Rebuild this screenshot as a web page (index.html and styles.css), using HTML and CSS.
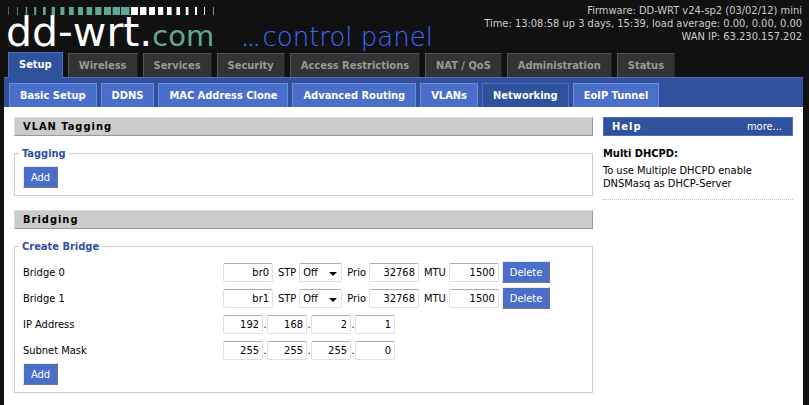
FILE: index.html
```html
<!DOCTYPE html>
<html lang="en">
<head>
<meta charset="utf-8">
<title>DD-WRT - Networking</title>
<link rel="stylesheet" href="styles.css">
</head>
<body>
<div class="wrapper">
  <header class="header">
    <div class="logo">
      <svg class="bars" width="208" height="8" viewBox="0 0 208 8" aria-hidden="true">
        <g fill="#5fa896">
          <rect x="0" width="0.6" height="8"/><rect x="9" width="0.8" height="8"/><rect x="17.8" width="1.4" height="8"/><rect x="26.2" width="2" height="8"/><rect x="35" width="2.7" height="8"/><rect x="43.6" width="3.4" height="8"/><rect x="52.4" width="4" height="8"/><rect x="61" width="4.7" height="8"/><rect x="70" width="5" height="8"/><rect x="78.6" width="5.6" height="8"/><rect x="87.2" width="6.2" height="8"/><rect x="96" width="7" height="8"/><rect x="104.6" width="7.4" height="8"/><rect x="113" width="8.6" height="8"/>
        </g>
        <g fill="#fff">
          <rect x="123" width="7" height="8"/><rect x="132" width="6.4" height="8"/><rect x="141" width="6" height="8"/><rect x="150" width="5.2" height="8"/><rect x="159" width="4.6" height="8"/><rect x="168.4" width="3.6" height="8"/><rect x="177.8" width="2.6" height="8"/><rect x="187" width="2" height="8"/><rect x="196" width="0.9" height="8"/><rect x="205" width="0.5" height="8"/>
        </g>
      </svg>
      <div class="brand"><span class="name">dd-wrt.</span><span class="tld">com</span><span class="dots">...</span><span class="tagline">control panel</span></div>
    </div>
    <div class="info">
      <div>Firmware: DD-WRT v24-sp2 (03/02/12) mini</div>
      <div>Time: 13:08:58 up 3 days, 15:39, load average: 0.00, 0.00, 0.00</div>
      <div>WAN IP: 63.230.157.202</div>
    </div>
  </header>
  <nav class="tabs">
    <a class="tab current" href="#">Setup</a>
    <a class="tab" href="#">Wireless</a>
    <a class="tab" href="#">Services</a>
    <a class="tab" href="#">Security</a>
    <a class="tab" href="#">Access Restrictions</a>
    <a class="tab" href="#">NAT / QoS</a>
    <a class="tab" href="#">Administration</a>
    <a class="tab" href="#">Status</a>
  </nav>
  <nav class="subtabs">
    <a class="subtab" href="#">Basic Setup</a>
    <a class="subtab" href="#">DDNS</a>
    <a class="subtab" href="#">MAC Address Clone</a>
    <a class="subtab" href="#">Advanced Routing</a>
    <a class="subtab" href="#">VLANs</a>
    <a class="subtab current" href="#">Networking</a>
    <a class="subtab" href="#">EoIP Tunnel</a>
  </nav>
  <div class="content">
    <main class="main">
      <h2 class="bar">VLAN Tagging</h2>
      <fieldset class="group">
        <legend>Tagging</legend>
        <button class="btn" type="button">Add</button>
      </fieldset>
      <h2 class="bar">Bridging</h2>
      <fieldset class="group">
        <legend>Create Bridge</legend>
        <div class="row">
          <label class="label" for="b0">Bridge 0</label>
          <div class="fields">
            <input class="text" id="b0" value="br0">
            <label for="stp0">STP</label>
            <span class="pick"><select id="stp0"><option>Off</option><option>On</option></select></span>
            <label for="prio0">Prio</label>
            <input class="text" id="prio0" value="32768">
            <label for="mtu0">MTU</label>
            <input class="text" id="mtu0" value="1500">
            <button class="btn" type="button">Delete</button>
          </div>
        </div>
        <div class="row">
          <label class="label" for="b1">Bridge 1</label>
          <div class="fields">
            <input class="text" id="b1" value="br1">
            <label for="stp1">STP</label>
            <span class="pick"><select id="stp1"><option>Off</option><option>On</option></select></span>
            <label for="prio1">Prio</label>
            <input class="text" id="prio1" value="32768">
            <label for="mtu1">MTU</label>
            <input class="text" id="mtu1" value="1500">
            <button class="btn" type="button">Delete</button>
          </div>
        </div>
        <div class="row">
          <label class="label" for="ip">IP Address</label>
          <div class="octets">
            <input class="text" id="ip" value="192"><span>.</span>
            <input class="text" aria-label="IP octet 2" value="168"><span>.</span>
            <input class="text" aria-label="IP octet 3" value="2"><span>.</span>
            <input class="text" aria-label="IP octet 4" value="1">
          </div>
        </div>
        <div class="row">
          <label class="label" for="mask">Subnet Mask</label>
          <div class="octets">
            <input class="text" id="mask" value="255"><span>.</span>
            <input class="text" aria-label="Mask octet 2" value="255"><span>.</span>
            <input class="text" aria-label="Mask octet 3" value="255"><span>.</span>
            <input class="text" aria-label="Mask octet 4" value="0">
          </div>
        </div>
        <button class="btn" type="button">Add</button>
      </fieldset>
    </main>
    <aside class="help">
      <div class="bar help-bar"><h2>Help</h2><a href="#">more...</a></div>
      <h3>Multi DHCPD:</h3>
      <p>To use Multiple DHCPD enable DNSMasq as DHCP-Server</p>
    </aside>
  </div>
</div>
</body>
</html>
```
FILE: styles.css
```css
* { box-sizing: border-box; }

body {
  margin: 0;
  background: #111;
  color: #000;
  font: 11px/13px "DejaVu Sans Condensed", "DejaVu Sans", sans-serif;
}

a { text-decoration: none; }
h2, h3, p { margin: 0; }
h2, h3 { font-size: 11px; }

.wrapper {
  display: flex;
  flex-direction: column;
  min-height: 100vh;
  padding: 0 6px 0 4px;
}

.header {
  display: flex;
  justify-content: space-between;
  height: 52px;
}

.logo {
  flex: none;
  padding: 7px 0 0 2px;
}

.bars {
  display: block;
  margin-left: 2px;
}

.brand {
  font-family: "DejaVu Sans", sans-serif;
  line-height: 34px;
  white-space: nowrap;
}

.name { color: #fff; font-size: 41px; }
.tld { color: #5fa896; font-size: 29px; }
.dots, .tagline { color: #3b6cff; }
.dots { margin: 0 3px 0 28px; font-size: 18px; }
.tagline { font-size: 26px; font-weight: 200; }

.info {
  padding: 4px 1px 0 0;
  color: #ccc;
  text-align: right;
  white-space: nowrap;
}

.tabs {
  display: flex;
  align-items: flex-end;
  gap: 5px;
  padding-left: 4px;
}

.tab, .subtab {
  padding: 0 10px;
  border: 1px solid;
  border-bottom: 0;
  font-weight: bold;
  line-height: 23px;
  white-space: nowrap;
}

.tab {
  border-color: #555 #222 #222 #555;
  background: #333;
  color: #999;
}

.tab.current {
  position: relative;
  margin-bottom: -1px;
  padding-bottom: 2px;
  border-color: #4a6fca;
  background: #30519c;
  color: #fff;
}

.subtabs {
  display: flex;
  gap: 4px;
  padding: 5px 5px 0;
  border-top: 1px solid #4a6fca;
  background: #30519c;
}

.subtab {
  border-color: #6a8be0;
  background: #4a6fca;
  color: #fff;
}

.subtab.current {
  border-color: #4a6fca;
  background: #30519c;
}

.content {
  display: flex;
  flex: 1;
  gap: 10px;
  padding: 10px;
  background: #fff;
}

.main { flex: 1; min-width: 0; }
.help { flex: none; width: 190px; }

.bar {
  height: 19px;
  padding: 0 8px;
  border: 1px solid;
  border-color: #ddd #999 #999 #ddd;
  background: #ccc;
  line-height: 18px;
  letter-spacing: 1px;
}

.group {
  min-width: 0;
  margin: 10px 0 14px;
  padding: 5px 8px 7px;
  border: 1px solid #ccc;
}

.group legend {
  margin-left: -4px;
  padding: 0 3px;
  color: #30519c;
  font-weight: bold;
  line-height: 15px;
}

.btn {
  display: block;
  height: 22px;
  padding: 0 7px;
  border: 1px solid;
  border-color: #eee #777 #777 #eee;
  background: #4a6fca;
  color: #fff;
  font: inherit;
}

.row {
  display: flex;
  align-items: center;
  height: 26px;
}

.label { width: 200px; flex: none; }

.fields { display: flex; align-items: center; }
.fields label { margin: 0 3px 0 5px; }
.fields .btn { margin-left: 3px; }

.text {
  width: 50px;
  height: 19px;
  padding: 1px 3px 0;
  border: 1px solid #dbdfe6;
  border-top-color: #abadb3;
  border-radius: 2px;
  background: #fff;
  color: #000;
  font: inherit;
  text-align: right;
}

.octets { display: flex; align-items: center; }
.octets .text { width: 40px; }
.octets span { width: 4px; text-align: center; }

.pick { position: relative; }

.pick::after {
  content: "";
  position: absolute;
  top: 9px;
  right: 5px;
  border: 4px solid transparent;
  border-top-color: #000;
  border-bottom: 0;
  pointer-events: none;
}

.pick select {
  display: block;
  width: 43px;
  height: 19px;
  padding: 0 3px;
  border: 1px solid #dbdfe6;
  border-top-color: #abadb3;
  border-radius: 2px;
  appearance: none;
  background: #fff;
  color: #000;
  font: inherit;
}

.help-bar {
  display: flex;
  justify-content: space-between;
  border-color: #4a6fca;
  background: #30519c;
  color: #fff;
}

.help-bar a {
  padding-right: 2px;
  color: #fff;
  letter-spacing: 0;
}

.help h3 {
  margin-top: 10px;
  line-height: 15px;
}

.help p {
  margin-top: 3px;
  padding-bottom: 9px;
  border-bottom: 1px dotted #bbb;
}
```
